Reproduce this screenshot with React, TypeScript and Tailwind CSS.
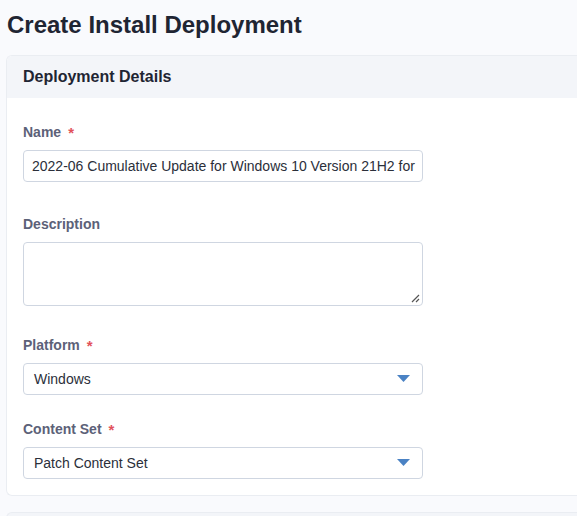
import * as React from 'react';

const Label = ({ text, required }: { text: string; required?: boolean }) => (
  <div className="flex items-center h-5 text-[14px] font-bold text-[#5c6178]">
    <span>{text}</span>
    {required && <span className="ml-[7px] text-[#e2525c] text-[15px] leading-none">*</span>}
  </div>
);

const SelectBox = ({ value }: { value: string }) => (
  <div className="mt-2 flex items-center justify-between w-[400px] h-[32px] rounded-[4px] border border-[#cfd6e1] bg-white pl-[10px] pr-[10px] text-[14px] text-[#2b2f3a]">
    <span>{value}</span>
    <svg width="14" height="8" viewBox="0 0 14 8" className="mr-[1px]">
      <path d="M0 0 H13 L6.5 7 Z" fill="#4a82c4" />
    </svg>
  </div>
);

export default function App() {
  return (
    <div className="min-h-screen bg-[#f9fafd] font-['Liberation_Sans',Arial,sans-serif] overflow-hidden">
      <h1 className="pl-[7px] pt-[10px] h-[55px] text-[24px] leading-[30px] font-bold text-[#1f2533]">
        Create Install Deployment
      </h1>

      <div className="ml-[6px] rounded-l-[6px] border border-r-0 border-[#eaedf2] bg-white overflow-hidden">
        <div className="h-[42px] flex items-center pl-[16px] bg-[#f3f5f9] text-[16px] font-bold text-[#1f2533]">
          Deployment Details
        </div>

        <div className="pl-[16px] pt-[24px] pb-[16px]">
          <Label text="Name" required />
          <div className="mt-2 flex items-center w-[400px] h-[32px] rounded-[4px] border border-[#cfd6e1] bg-white px-[8px] text-[14px] text-[#2b2f3a] whitespace-nowrap overflow-hidden">
            2022-06 Cumulative Update for Windows 10 Version 21H2 for
          </div>

          <div className="mt-[32px]">
            <Label text="Description" />
            <div className="relative mt-2 w-[400px] h-[64px] rounded-[4px] border border-[#cfd6e1] bg-white">
              <svg width="9" height="9" viewBox="0 0 9 9" className="absolute right-[2px] bottom-[2px]">
                <path d="M1 8 L8 1 M5 8 L8 5" stroke="#555" strokeWidth="1.2" />
              </svg>
            </div>
          </div>

          <div className="mt-[29px]">
            <Label text="Platform" required />
            <SelectBox value="Windows" />
          </div>

          <div className="mt-[24px]">
            <Label text="Content Set" required />
            <SelectBox value="Patch Content Set" />
          </div>
        </div>
      </div>

      <div className="ml-[6px] mt-[16px] h-[40px] rounded-l-[6px] border border-r-0 border-[#eaedf2] bg-[#f3f5f9]" />
    </div>
  );
}
